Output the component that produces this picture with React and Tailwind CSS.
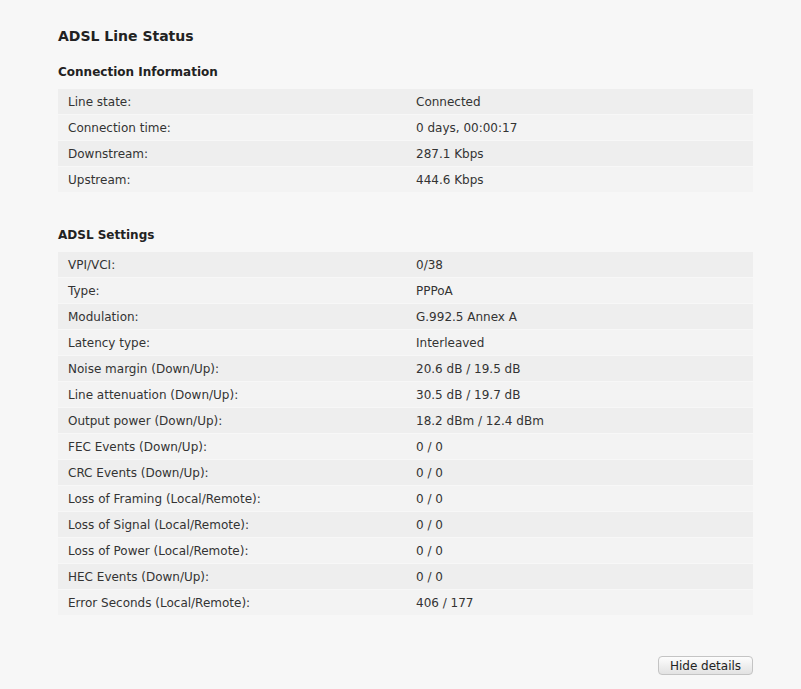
const connection = [
  ['Line state:', 'Connected'],
  ['Connection time:', '0 days, 00:00:17'],
  ['Downstream:', '287.1 Kbps'],
  ['Upstream:', '444.6 Kbps'],
]

const settings = [
  ['VPI/VCI:', '0/38'],
  ['Type:', 'PPPoA'],
  ['Modulation:', 'G.992.5 Annex A'],
  ['Latency type:', 'Interleaved'],
  ['Noise margin (Down/Up):', '20.6 dB / 19.5 dB'],
  ['Line attenuation (Down/Up):', '30.5 dB / 19.7 dB'],
  ['Output power (Down/Up):', '18.2 dBm / 12.4 dBm'],
  ['FEC Events (Down/Up):', '0 / 0'],
  ['CRC Events (Down/Up):', '0 / 0'],
  ['Loss of Framing (Local/Remote):', '0 / 0'],
  ['Loss of Signal (Local/Remote):', '0 / 0'],
  ['Loss of Power (Local/Remote):', '0 / 0'],
  ['HEC Events (Down/Up):', '0 / 0'],
  ['Error Seconds (Local/Remote):', '406 / 177'],
]

function StatusTable({ rows }) {
  return (
    <div className="w-[695px] flex flex-col gap-px">
      {rows.map(([label, value], i) => (
        <div
          key={label}
          className={`flex items-center h-[25px] text-[12px] text-[#333] ${i % 2 === 0 ? 'bg-[#eeeeee]' : 'bg-[#f3f3f3]'}`}
        >
          <div className="w-[358px] pl-[10px]">{label}</div>
          <div>{value}</div>
        </div>
      ))}
    </div>
  )
}

export default function App() {
  return (
    <div className="min-h-[689px] bg-[#f7f7f7] px-[58px] pt-[27px] font-['DejaVu_Sans',Verdana,sans-serif]">
      <h1 className="text-[14px] leading-[18px] font-bold text-[#222]">ADSL Line Status</h1>

      <h2 className="mt-[19px] text-[12px] leading-[16px] font-bold text-[#222]">Connection Information</h2>
      <div className="mt-[9px]">
        <StatusTable rows={connection} />
      </div>

      <h2 className="mt-[35px] text-[12px] leading-[16px] font-bold text-[#222]">ADSL Settings</h2>
      <div className="mt-[9px]">
        <StatusTable rows={settings} />
      </div>

      <div className="w-[695px] flex justify-end mt-[41px]">
        <button className="h-[19px] w-[95px] rounded-[4px] border border-[#c4c4c4] bg-gradient-to-b from-[#fdfdfd] to-[#e2e2e2] text-[12px] leading-none text-[#222]">
          Hide details
        </button>
      </div>
    </div>
  )
}
